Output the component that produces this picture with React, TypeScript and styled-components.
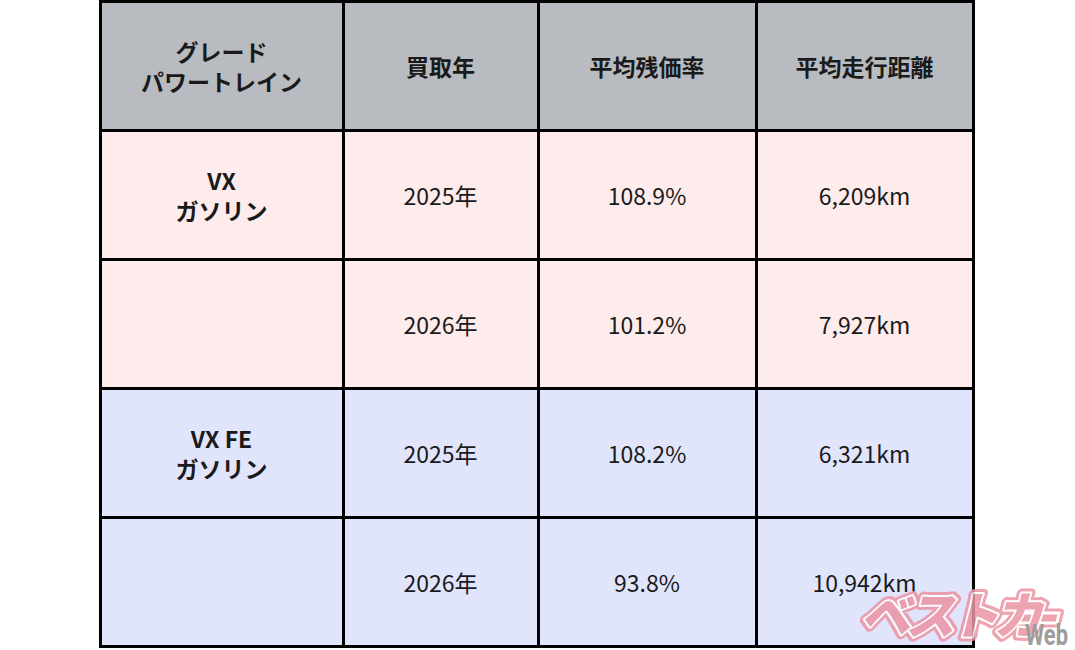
import React from 'react';
import styled, { createGlobalStyle } from 'styled-components';

const GlobalStyle = createGlobalStyle`
  html, body {
    margin: 0;
    padding: 0;
    background: #ffffff;
  }
  body {
    font-family: "Noto Sans CJK JP", "Noto Sans", sans-serif;
  }
`;

type Tone = 'head' | 'pink' | 'blue';

const toneBg: Record<Tone, string> = {
  head: '#b8bcc0',
  pink: '#feebeb',
  blue: '#e1e5fb',
};

interface Row {
  tone: Tone;
  grade: string[];
  year: string;
  rate: string;
  distance: string;
}

const rows: Row[] = [
  { tone: 'pink', grade: ['VX', 'ガソリン'], year: '2025年', rate: '108.9%', distance: '6,209km' },
  { tone: 'pink', grade: [], year: '2026年', rate: '101.2%', distance: '7,927km' },
  { tone: 'blue', grade: ['VX FE', 'ガソリン'], year: '2025年', rate: '108.2%', distance: '6,321km' },
  { tone: 'blue', grade: [], year: '2026年', rate: '93.8%', distance: '10,942km' },
];

const PINK = '#ec93a4';

// two-line label, kept as one text block
const Lines = ({ items }: { items: string[] }) => (
  <span>
    {items.map((t, i) => (
      <React.Fragment key={t}>
        {i > 0 && <br />}
        {t}
      </React.Fragment>
    ))}
  </span>
);

export default function App() {
  return (
    <>
      <GlobalStyle />
      <Page>
        <Frame>
          <Table>
            <Cell $tone="head" $bold>
              <Lines items={['グレード', 'パワートレイン']} />
            </Cell>
            <Cell $tone="head" $bold>買取年</Cell>
            <Cell $tone="head" $bold>平均残価率</Cell>
            <Cell $tone="head" $bold>平均走行距離</Cell>
            {rows.map((r, i) => (
              <React.Fragment key={i}>
                <Cell $tone={r.tone} $bold>
                  {r.grade.length > 0 && <Lines items={r.grade} />}
                </Cell>
                <Cell $tone={r.tone}>{r.year}</Cell>
                <Cell $tone={r.tone}>{r.rate}</Cell>
                <Cell $tone={r.tone}>{r.distance}</Cell>
              </React.Fragment>
            ))}
          </Table>
          <Logo aria-label="ベストカーWeb">
            <svg width="240" height="72" viewBox="0 0 240 72">
              <g transform="skewX(-14)">
                <rect x="196" y="35" width="40" height="10" fill={PINK} stroke={PINK} strokeWidth="9" strokeLinejoin="round" />
                <text
                  x="42"
                  y="56"
                  fontFamily="'Noto Sans CJK JP', sans-serif"
                  fontWeight="900"
                  fontSize="50"
                  letterSpacing="-6"
                  fill={PINK}
                  stroke={PINK}
                  strokeWidth="10"
                  strokeLinejoin="round"
                >
                  ベストカ
                </text>
                <rect x="196" y="35" width="40" height="10" fill={PINK} stroke="#ffffff" strokeWidth="3" />
                <text
                  x="42"
                  y="56"
                  fontFamily="'Noto Sans CJK JP', sans-serif"
                  fontWeight="900"
                  fontSize="50"
                  letterSpacing="-6"
                  fill={PINK}
                  stroke="#ffffff"
                  strokeWidth="4"
                  strokeLinejoin="round"
                  paintOrder="stroke"
                >
                  ベストカ
                </text>
              </g>
              <WebText x="193" y="67" textLength="43" lengthAdjust="spacingAndGlyphs">
                Web
              </WebText>
            </svg>
          </Logo>
        </Frame>
      </Page>
    </>
  );
}

const Page = styled.div`
  position: relative;
  width: 1075px;
  height: 650px;
  overflow: hidden;
  display: flex;
  justify-content: center;
  align-items: flex-start;
`;

const Frame = styled.div`
  position: relative;
  width: 876px;
  margin-right: 2px;
`;

const Table = styled.div`
  display: grid;
  grid-template-columns: 240px 192px 215px 214px;
  grid-auto-rows: 126px;
  gap: 3px;
  padding: 3px;
  background: #000000;
  box-sizing: border-box;
`;

const Cell = styled.div<{ $tone: Tone; $bold?: boolean }>`
  background: ${(p) => toneBg[p.$tone]};
  display: flex;
  flex-direction: column;
  align-items: center;
  justify-content: center;
  text-align: center;
  font-family: "Noto Sans CJK JP", "Noto Sans", sans-serif;
  font-size: 23px;
  line-height: 30px;
  font-weight: ${(p) => (p.$bold ? 700 : 400)};
  color: #1a1a1a;
`;

const Logo = styled.div`
  position: absolute;
  right: -97px;
  bottom: -2px;
  opacity: 0.85;
  pointer-events: none;
  line-height: 0;
`;

const WebText = styled.text`
  font-family: "Roboto", "Liberation Sans", sans-serif;
  font-weight: 700;
  font-size: 30px;
  fill: #8c8c8c;
`;
